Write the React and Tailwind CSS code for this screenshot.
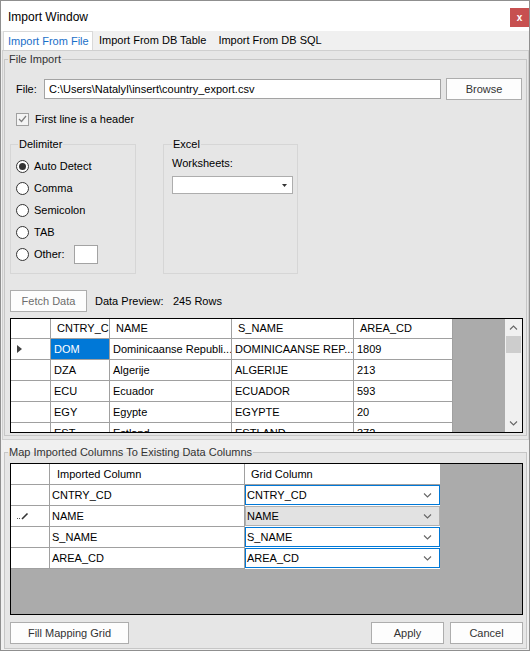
// Import Window – WinForms-style dialog

import React from 'react';

const Btn = ({ children, className = '', muted = false }) => (
  <div
    className={`h-[22px] flex items-center justify-center border border-[#adadad] bg-[#fdfdfd] ${
      muted ? 'text-[#6d6d6d]' : 'text-[#333333]'
    } ${className}`}
  >
    {children}
  </div>
);

const Radio = ({ label, checked = false, children }) => (
  <div className="h-[22px] flex items-center">
    <span className="w-[13px] h-[13px] rounded-full border border-[#333333] bg-white flex items-center justify-center">
      {checked && <span className="w-[7px] h-[7px] rounded-full bg-[#333333]" />}
    </span>
    {children ? (
      <>
        <span className="ml-[5px] w-[40px]">{label}</span>
        {children}
      </>
    ) : (
      <span className="ml-[5px]">{label}</span>
    )}
  </div>
);

const Chevron = ({ up = false }) => (
  <svg width="9" height="5" viewBox="0 0 9 5">
    <path
      d={up ? 'M1 4.5L4.5 1L8 4.5' : 'M1 0.5L4.5 4L8 0.5'}
      fill="none"
      stroke="#666666"
      strokeWidth="1.1"
    />
  </svg>
);

const rows = [
  ['DOM', 'Dominicaanse Republi...', 'DOMINICAANSE REP...', '1809'],
  ['DZA', 'Algerije', 'ALGERIJE', '213'],
  ['ECU', 'Ecuador', 'ECUADOR', '593'],
  ['EGY', 'Egypte', 'EGYPTE', '20'],
  ['EST', 'Estland', 'ESTLAND', '372'],
];

const widths = ['w-[59px]', 'w-[122px]', 'w-[122px]', 'w-[99px]'];

const DataGrid = () => (
  <div className="mt-[6px] ml-[5px] w-[513px] h-[115px] border border-black bg-[#ababab] flex overflow-hidden">
    <div className="w-[442px] flex flex-col">
      {/* header */}
      <div className="flex h-[20px] shrink-0 bg-white">
        <div className="w-[40px] border-r border-b border-[#a0a0a0]" />
        {['CNTRY_CD', 'NAME', 'S_NAME', 'AREA_CD'].map((h, i) => (
          <div
            key={h}
            className={`${widths[i]} pl-[6px] border-r border-b border-[#a0a0a0] flex items-center overflow-hidden whitespace-nowrap`}
          >
            {h}
          </div>
        ))}
      </div>
      {rows.map((r, ri) => (
        <div key={r[0]} className="flex h-[21px] shrink-0 bg-white">
          <div className="w-[40px] pl-[6px] border-r border-b border-[#a0a0a0] flex items-center">
            {ri === 0 && (
              <svg width="5" height="8" viewBox="0 0 5 8">
                <polygon points="0,0 5,4 0,8" fill="#404040" />
              </svg>
            )}
          </div>
          {r.map((c, ci) => (
            <div
              key={ci}
              className={`${widths[ci]} pl-[3px] border-r border-b border-[#a0a0a0] flex items-center overflow-hidden whitespace-nowrap ${
                ri === 0 && ci === 0 ? 'bg-[#0078d7] text-white' : ''
              }`}
            >
              {c}
            </div>
          ))}
        </div>
      ))}
    </div>
    <div className="flex-1" />
    {/* vertical scrollbar */}
    <div className="w-[17px] bg-[#f0f0f0] flex flex-col">
      <div className="h-[17px] flex items-center justify-center">
        <Chevron up />
      </div>
      <div className="mx-[1px] h-[17px] bg-[#cdcdcd]" />
      <div className="flex-1" />
      <div className="h-[17px] flex items-center justify-center">
        <Chevron />
      </div>
    </div>
  </div>
);

const mapRows = ['CNTRY_CD', 'NAME', 'S_NAME', 'AREA_CD'];

const MappingGrid = () => (
  <div className="mt-[4px] ml-[5px] w-[513px] h-[152px] border border-black bg-[#ababab] flex flex-col overflow-hidden">
    <div className="flex h-[21px] shrink-0">
      <div className="w-[39px] bg-white border-r border-b border-[#a0a0a0]" />
      <div className="w-[195px] pl-[7px] bg-white border-r border-b border-[#a0a0a0] flex items-center">
        Imported Column
      </div>
      <div className="w-[195px] pl-[6px] bg-white border-b border-[#a0a0a0] flex items-center">
        Grid Column
      </div>
    </div>
    {mapRows.map((name) => {
      const editing = name === 'NAME';
      return (
        <div key={name} className="flex h-[21px] shrink-0">
          <div className="w-[39px] pl-[6px] bg-white border-r border-b border-[#a0a0a0] flex items-center">
            {editing && (
              <svg width="12" height="8" viewBox="0 0 12 8">
                <rect x="0" y="6" width="1" height="1" fill="#555555" />
                <rect x="2" y="6" width="1" height="1" fill="#555555" />
                <path d="M5 7L10.5 1.5" stroke="#333333" strokeWidth="1.6" />
              </svg>
            )}
          </div>
          <div className="w-[195px] pl-[2px] bg-white border-r border-b border-[#a0a0a0] flex items-center">
            {name}
          </div>
          <div className="w-[195px] pb-[1px] bg-white">
            <div
              className={`h-full pl-[1px] pr-[7px] border flex items-center justify-between ${
                editing ? 'border-[#b0b0b0] bg-[#e2e2e2]' : 'border-[#0078d7] bg-white'
              }`}
            >
              <span>{name}</span>
              <Chevron />
            </div>
          </div>
        </div>
      );
    })}
  </div>
);

export default function App() {
  return (
    <div className="w-[531px] h-[651px] bg-white font-['Liberation_Sans',Arial,sans-serif] text-[11px] leading-[13px] text-black">
      <div className="w-[530px] h-[651px] border border-[#8f8f8f] bg-[#f0f0f0] flex flex-col overflow-hidden">
        {/* title bar */}
        <div className="h-[30px] shrink-0 bg-white flex items-start justify-between pl-[7px]">
          <span className="mt-[9px] text-[12px] leading-[14px]">Import Window</span>
          <div className="mt-[7px] w-[19px] h-[19px] bg-[#c75050] text-white text-[10px] font-bold flex items-center justify-center">
            x
          </div>
        </div>

        {/* tabs */}
        <div className="h-[19px] shrink-0 flex items-stretch">
          <div className="ml-[2px] w-[90px] pl-[4px] bg-white border-x border-t border-[#d9d9d9] flex items-center text-[#1a6fc9]">
            Import From File
          </div>
          <div className="px-[6px] flex items-center">Import From DB Table</div>
          <div className="px-[6px] flex items-center">Import From DB SQL</div>
        </div>

        {/* tab page */}
        <div className="ml-[1px] w-[527px] h-[390px] shrink-0 border border-[#cfcfcf] bg-[#e6e6e6]">
          <fieldset className="mt-[2px] mx-[1px] border border-[#c6c6c6]">
            <legend className="ml-[3px] px-[1px] text-[#333333]">File Import</legend>

            <div className="mt-[12px] pl-[11px] h-[22px] flex items-center">
              <span className="w-[28px]">File:</span>
              <div className="w-[397px] h-[20px] pl-[4px] border border-[#a3a3a3] bg-white flex items-center whitespace-nowrap">
                C:\Users\NatalyI\insert\country_export.csv
              </div>
              <Btn className="ml-[5px] w-[76px]">Browse</Btn>
            </div>

            <div className="mt-[12px] ml-[11px] h-[14px] flex items-center">
              <span className="w-[13px] h-[13px] border border-[#a0a0a0] bg-[#f4f4f4] flex items-center justify-center">
                <svg width="9" height="8" viewBox="0 0 9 8">
                  <path d="M1 4L3.5 6.5L8 1" fill="none" stroke="#7d7d7d" strokeWidth="1.2" />
                </svg>
              </span>
              <span className="ml-[6px]">First line is a header</span>
            </div>

            <div className="mt-[12px] ml-[5px] flex items-stretch">
              <fieldset className="w-[126px] border border-[#d6d6d6] pl-[5px] pt-[4px] pb-[8px]">
                <legend className="ml-[2px] px-[1px]">Delimiter</legend>
                <Radio label="Auto Detect" checked />
                <Radio label="Comma" />
                <Radio label="Semicolon" />
                <Radio label="TAB" />
                <Radio label="Other:">
                  <span className="w-[24px] h-[19px] border border-[#a3a3a3] bg-white" />
                </Radio>
              </fieldset>

              <fieldset className="ml-[27px] w-[135px] border border-[#d6d6d6] pl-[8px]">
                <legend className="px-[1px]">Excel</legend>
                <div className="mt-[6px]">Worksheets:</div>
                <div className="mt-[6px] w-[121px] h-[18px] border border-[#adadad] bg-white flex items-center justify-end pr-[5px]">
                  <svg width="5" height="3" viewBox="0 0 5 3">
                    <polygon points="0,0 5,0 2.5,3" fill="#333333" />
                  </svg>
                </div>
              </fieldset>
            </div>

            <div className="mt-[16px] ml-[5px] h-[22px] flex items-center">
              <Btn muted className="w-[77px]">Fetch Data</Btn>
              <span className="ml-[8px] w-[78px]">Data Preview:</span>
              <span>245 Rows</span>
            </div>

            <DataGrid />
            <div className="h-[2px]" />
          </fieldset>
        </div>

        {/* mapping group */}
        <fieldset className="mt-[6px] ml-[3px] w-[523px] border border-[#c6c6c6] bg-[#e6e6e6]">
          <legend className="ml-[3px] px-[1px] text-[#333333]">
            Map Imported Columns To Existing Data Columns
          </legend>
          <MappingGrid />
          <div className="mt-[7px] ml-[5px] mr-[3px] mb-[4px] flex">
            <Btn className="w-[119px]">Fill Mapping Grid</Btn>
            <div className="flex-1" />
            <Btn className="w-[73px]">Apply</Btn>
            <Btn className="ml-[6px] w-[73px]">Cancel</Btn>
          </div>
        </fieldset>
      </div>
    </div>
  );
}
